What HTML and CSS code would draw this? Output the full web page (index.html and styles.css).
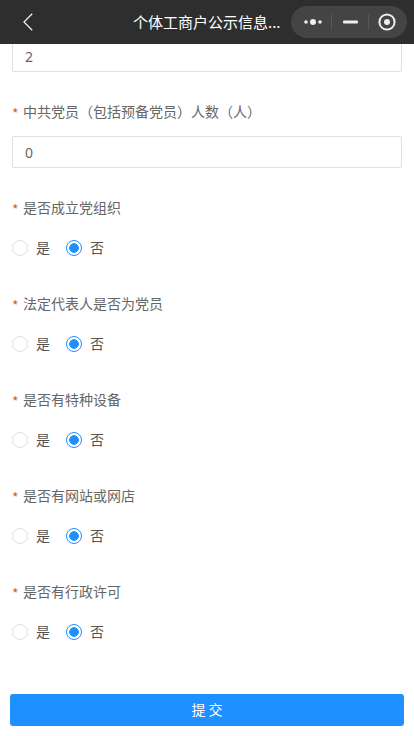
FILE: index.html
```html
<!DOCTYPE html>
<html lang="zh-CN">
<head>
    <meta charset="UTF-8">
    <meta name="viewport" content="width=device-width, initial-scale=1.0">
    <title>个体工商户公示信息</title>
    <link rel="stylesheet" href="styles.css">
</head>
<body>
    <header class="nav">
        <button class="nav-back" aria-label="返回">
            <svg width="12" height="20" viewBox="0 0 12 20"><path d="M10.2 1.8 L2 10 L10.2 18.2" fill="none" stroke="#eeeeee" stroke-width="1.3"/></svg>
        </button>
        <div class="nav-title">个体工商户公示信息...</div>
        <div class="capsule">
            <span class="capsule-cell cell-more">
                <svg width="20" height="8" viewBox="0 0 20 8"><circle cx="3" cy="4" r="1.8" fill="#eee"/><circle cx="10" cy="4" r="3" fill="#eee"/><circle cx="17" cy="4" r="1.8" fill="#eee"/></svg>
            </span>
            <span class="capsule-cell cell-min">
                <svg width="15" height="4" viewBox="0 0 15 4"><rect y="0.5" width="15" height="3" rx="1" fill="#eee"/></svg>
            </span>
            <span class="capsule-cell cell-close">
                <svg width="18" height="18" viewBox="0 0 18 18"><circle cx="9" cy="9" r="7.6" fill="none" stroke="#eee" stroke-width="2"/><circle cx="9" cy="9" r="3" fill="#eee"/></svg>
            </span>
        </div>
    </header>

    <form class="form">
        <input class="text-input first-input" type="text" value="2">

        <label class="field-label"><i>*</i>中共党员（包括预备党员）人数（人）</label>
        <input class="text-input" type="text" value="0">

        <div class="field-label after-input"><i>*</i>是否成立党组织</div>
        <div class="radios">
            <span class="radio"></span><span class="radio-text">是</span>
            <span class="radio checked"></span><span class="radio-text">否</span>
        </div>

        <div class="field-label"><i>*</i>法定代表人是否为党员</div>
        <div class="radios">
            <span class="radio"></span><span class="radio-text">是</span>
            <span class="radio checked"></span><span class="radio-text">否</span>
        </div>

        <div class="field-label"><i>*</i>是否有特种设备</div>
        <div class="radios">
            <span class="radio"></span><span class="radio-text">是</span>
            <span class="radio checked"></span><span class="radio-text">否</span>
        </div>

        <div class="field-label"><i>*</i>是否有网站或网店</div>
        <div class="radios">
            <span class="radio"></span><span class="radio-text">是</span>
            <span class="radio checked"></span><span class="radio-text">否</span>
        </div>

        <div class="field-label"><i>*</i>是否有行政许可</div>
        <div class="radios">
            <span class="radio"></span><span class="radio-text">是</span>
            <span class="radio checked"></span><span class="radio-text">否</span>
        </div>

        <button class="submit" type="button">提 交</button>
    </form>
</body>
</html>
```

FILE: styles.css
```css
* {
    box-sizing: border-box;
}
html, body {
    height: 736px;
    overflow: hidden;
}
body {
    margin: 0;
    background-color: #ffffff;
    font-family: "Noto Sans CJK SC", "Noto Sans", sans-serif;
    font-size: 14px;
    color: #666666;
}
.nav {
    position: relative;
    z-index: 2;
    display: flex;
    align-items: center;
    height: 44px;
    background-color: #2e2e2e;
}
.nav-back {
    display: flex;
    align-items: center;
    margin-left: 22px;
    padding: 0;
    border: none;
    background: none;
}
.nav-title {
    margin-left: 99px;
    width: 158px;
    font-size: 15px;
    line-height: 44px;
    color: #ffffff;
    white-space: nowrap;
}
.capsule {
    display: flex;
    align-items: center;
    width: 116px;
    height: 32px;
    border-radius: 16px;
    background-color: #444444;
}
.capsule-cell {
    display: flex;
    align-items: center;
    justify-content: center;
    height: 16px;
    border-left: 1px solid #575757;
}
.cell-more {
    width: 40px;
    padding-left: 4px;
    border-left: none;
}
.cell-min {
    width: 37px;
}
.cell-close {
    width: 39px;
    padding-right: 3px;
}
.form {
    padding: 0 12px;
    margin-top: -4px;
}
.text-input {
    display: block;
    width: 100%;
    height: 32px;
    padding: 0 12px;
    border: 1px solid #dcdfe6;
    border-radius: 1px;
    font-family: "Noto Sans", sans-serif;
    font-size: 14px;
    color: #666666;
    background-color: #ffffff;
}
.field-label {
    display: block;
    height: 20px;
    margin-top: 36px;
    line-height: 20px;
    color: #666666;
    white-space: nowrap;
}
.first-input + .field-label {
    margin-top: 29px;
    margin-bottom: 15px;
}
.field-label.after-input {
    margin-top: 29px;
}
.field-label i {
    display: inline-block;
    width: 11px;
    font-style: normal;
    font-size: 14px;
    vertical-align: -2px;
    color: #d9534f;
}
.radios {
    display: flex;
    align-items: center;
    height: 20px;
    margin-top: 20px;
}
.radio {
    width: 16px;
    height: 16px;
    margin-top: 2px;
    border: 1px solid #dcdfe6;
    border-radius: 50%;
    background-color: #ffffff;
}
.radio.checked {
    border-color: #1e90ff;
    background: radial-gradient(circle, #1e90ff 0, #1e90ff 4.5px, #ffffff 5px);
}
.radio-text {
    width: 30px;
    margin-left: 8px;
    color: #555555;
}
.submit {
    display: block;
    width: 394px;
    height: 32px;
    margin: 53px 0 0 -2px;
    padding: 0 0 2px;
    border: none;
    border-radius: 3px;
    background-color: #1e90ff;
    font-family: inherit;
    font-size: 14px;
    color: #ffffff;
}
```
